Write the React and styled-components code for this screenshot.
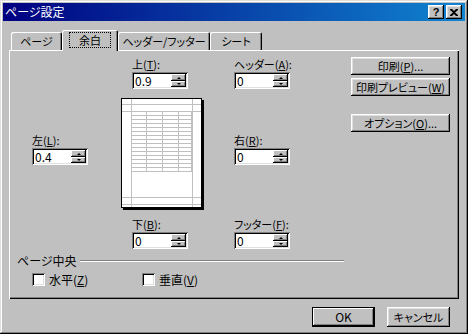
import styled, { createGlobalStyle } from "styled-components";

const GlobalStyle = createGlobalStyle`
  body {
    margin: 0;
    background: #c0c0c0;
  }
  * {
    box-sizing: border-box;
  }
`;

const uiFont = `"Noto Sans CJK JP", "Liberation Sans", sans-serif`;

const raised = `
  box-shadow: inset -1px -1px #000, inset 1px 1px #fff,
    inset -2px -2px #808080, inset 2px 2px #dfdfdf;
`;

const sunken = `
  box-shadow: inset 1px 1px #808080, inset -1px -1px #fff,
    inset 2px 2px #000, inset -2px -2px #dfdfdf;
`;

function Key({ children }) {
  return <Underline>{children}</Underline>;
}

function SpinField({ label, hotkey, value, area, offset, indent }) {
  return (
    <Field $area={area} $offset={offset} $indent={indent}>
      <FieldLabel>
        {label}(<Key>{hotkey}</Key>):
      </FieldLabel>
      <SpinBox>
        <SpinValue>{value}</SpinValue>
        <Spinner>
          <SpinButton>
            <ArrowUp />
          </SpinButton>
          <SpinButton>
            <ArrowDown />
          </SpinButton>
        </Spinner>
      </SpinBox>
    </Field>
  );
}

function PagePreview() {
  const rows = [];
  for (let y = 17.5; y <= 73.5; y += 4) rows.push(y);
  const cols = [25.5, 41.5, 57.5, 70.5];
  return (
    <Preview>
      <svg width="83" height="112" viewBox="0 0 83 112">
        <rect x="2" y="2" width="81" height="110" fill="#000" />
        <rect x="0.5" y="0.5" width="80" height="109" fill="#fff" stroke="#000" />
        <g stroke="#c0c0c0" strokeWidth="1">
          <line x1="10.5" y1="1" x2="10.5" y2="109" />
          <line x1="71.5" y1="1" x2="71.5" y2="109" />
          <line x1="1" y1="6.5" x2="80" y2="6.5" />
          <line x1="1" y1="13.5" x2="80" y2="13.5" />
          <line x1="1" y1="99.5" x2="80" y2="99.5" />
          <line x1="1" y1="106.5" x2="80" y2="106.5" />
          {rows.map((y) => (
            <line key={y} x1="10" y1={y} x2="71" y2={y} />
          ))}
          {cols.map((x) => (
            <line key={x} x1={x} y1="13" x2={x} y2="74" />
          ))}
        </g>
      </svg>
    </Preview>
  );
}

function App() {
  return (
    <>
      <GlobalStyle />
      <Window>
        <TitleBar>
          <TitleText>ページ設定</TitleText>
          <TitleButton>?</TitleButton>
          <TitleButton>
            <svg width="8" height="7" viewBox="0 0 8 7">
              <path d="M0 0h2l2 2 2-2h2v1L5 3.5 8 6v1H6L4 5 2 7H0V6l3-2.5L0 1z" fill="#000" />
            </svg>
          </TitleButton>
        </TitleBar>

        <TabRow>
          <Tab $width={51}>ページ</Tab>
          <Tab $width={56} $active>
            <Focus>余白</Focus>
          </Tab>
          <Tab $width={92}>ヘッダー/フッター</Tab>
          <Tab $width={52}>シート</Tab>
        </TabRow>

        <Panel>
          <TopRow>
            <Form>
              <SpinField area="top" label="上" hotkey="T" value="0.9" indent />
              <SpinField area="header" label="ヘッダー" hotkey="A" value="0" />
              <SpinField area="left" label="左" hotkey="L" value="0.4" offset />
              <PreviewCell>
                <PagePreview />
              </PreviewCell>
              <SpinField area="right" label="右" hotkey="R" value="0" offset />
              <SpinField area="bottom" label="下" hotkey="B" value="0" indent />
              <SpinField area="footer" label="フッター" hotkey="F" value="0" />
            </Form>
            <SideButtons>
              <Button $width={99} $height={18}>
                印刷(<Key>P</Key>)...
              </Button>
              <Button $width={99} $height={18}>
                印刷プレビュー(<Key>W</Key>)
              </Button>
              <Button $width={99} $height={18} $gap={18}>
                オプション(<Key>O</Key>)...
              </Button>
            </SideButtons>
          </TopRow>

          <Group>
            <Legend>
              <span>ページ中央</span>
              <Rule />
            </Legend>
            <CheckRow>
              <Check $width={110}>
                <CheckBox />
                <span>
                  水平(<Key>Z</Key>)
                </span>
              </Check>
              <Check>
                <CheckBox />
                <span>
                  垂直(<Key>V</Key>)
                </span>
              </Check>
            </CheckRow>
          </Group>
        </Panel>

        <Footer>
          <DefaultButton>OK</DefaultButton>
          <Button $width={63} $height={20}>
            キャンセル
          </Button>
        </Footer>
      </Window>
    </>
  );
}

const Window = styled.div`
  width: 468px;
  height: 334px;
  padding: 3px;
  display: flex;
  flex-direction: column;
  background: #c0c0c0;
  box-shadow: inset -1px -1px #000, inset 1px 1px #dfdfdf,
    inset -2px -2px #808080, inset 2px 2px #fff;
  font-family: ${uiFont};
  font-size: 11px;
  font-feature-settings: "palt";
  color: #000;
`;

const TitleBar = styled.div`
  height: 18px;
  display: flex;
  align-items: center;
  gap: 2px;
  padding: 0 3px 0 2px;
  background: linear-gradient(to right, #000080, #1084d0);
`;

const TitleText = styled.div`
  flex: 1;
  color: #fff;
  font-size: 12px;
  line-height: 18px;
`;

const TitleButton = styled.div`
  width: 16px;
  height: 14px;
  display: flex;
  align-items: center;
  justify-content: center;
  background: #c0c0c0;
  font-family: "Liberation Sans", sans-serif;
  font-weight: bold;
  font-size: 11px;
  line-height: 14px;
  ${raised}
`;

const TabRow = styled.div`
  height: 20px;
  margin-top: 9px;
  padding-left: 8px;
  display: flex;
  align-items: flex-start;
`;

const Tab = styled.div`
  width: ${(p) => p.$width}px;
  height: ${(p) => (p.$active ? 21 : 18)}px;
  margin-top: ${(p) => (p.$active ? 0 : 2)}px;
  position: relative;
  z-index: ${(p) => (p.$active ? 1 : 0)};
  display: flex;
  align-items: center;
  justify-content: center;
  padding-bottom: ${(p) => (p.$active ? 2 : 0)}px;
  background: #c0c0c0;
  border-radius: 2px 2px 0 0;
  font-size: 11px;
  line-height: 14px;
  white-space: nowrap;
  box-shadow: inset 1px 1px #fff, inset -1px 0 #000, inset -2px 0 #808080;
`;

const Focus = styled.span`
  padding: 0 9px;
  outline: 1px dotted #000;
  outline-offset: 0;
  line-height: 14px;
`;

const Panel = styled.div`
  width: 450px;
  height: 249px;
  margin-left: 6px;
  padding: 7px 0 0 8px;
  display: flex;
  flex-direction: column;
  background: #c0c0c0;
  box-shadow: inset 1px 1px #fff, inset -1px -1px #000, inset -2px -2px #808080;
`;

const TopRow = styled.div`
  display: flex;
  align-items: flex-start;
`;

const Form = styled.div`
  margin-left: 15px;
  display: grid;
  grid-template-columns: 89px 113px 96px;
  grid-template-rows: 32px 9px 112px 7px 32px;
  grid-template-areas:
    ". top header"
    ". . ."
    "left preview right"
    ". . ."
    ". bottom footer";
`;

const Field = styled.div`
  grid-area: ${(p) => p.$area};
  align-self: start;
  margin-top: ${(p) => (p.$offset ? 35 : 0)}px;
  padding-left: ${(p) => (p.$indent ? 11 : 0)}px;
  display: flex;
  flex-direction: column;
`;

const FieldLabel = styled.div`
  height: 15px;
  line-height: 14px;
  white-space: nowrap;
`;

const Underline = styled.span`
  text-decoration: underline;
  text-underline-offset: 1px;
`;

const SpinBox = styled.div`
  width: 56px;
  height: 17px;
  padding: 2px;
  display: flex;
  background: #fff;
  ${sunken}
`;

const SpinValue = styled.div`
  flex: 1;
  padding-left: 1px;
  line-height: 13px;
  font-size: 12px;
`;

const Spinner = styled.div`
  width: 15px;
  display: grid;
  grid-template-rows: 7px 6px;
`;

const SpinButton = styled.div`
  display: flex;
  align-items: center;
  justify-content: center;
  background: #c0c0c0;
  box-shadow: inset -1px -1px #000, inset 1px 1px #fff, inset -2px -2px #808080;
`;

const ArrowUp = styled.span`
  width: 0;
  height: 0;
  border-left: 2px solid transparent;
  border-right: 2px solid transparent;
  border-bottom: 2px solid #000;
`;

const ArrowDown = styled.span`
  width: 0;
  height: 0;
  border-left: 2px solid transparent;
  border-right: 2px solid transparent;
  border-top: 2px solid #000;
`;

const PreviewCell = styled.div`
  grid-area: preview;
`;

const Preview = styled.div`
  width: 83px;
  height: 112px;
  svg {
    display: block;
  }
`;

const SideButtons = styled.div`
  margin-left: 21px;
  display: flex;
  flex-direction: column;
  gap: 3px;
`;

const Button = styled.div`
  width: ${(p) => p.$width}px;
  height: ${(p) => p.$height}px;
  margin-top: ${(p) => (p.$gap ? p.$gap - 3 : 0)}px;
  display: flex;
  align-items: center;
  justify-content: center;
  background: #c0c0c0;
  line-height: 14px;
  white-space: nowrap;
  ${raised}
`;

const DefaultButton = styled.div`
  width: 63px;
  height: 20px;
  display: flex;
  align-items: center;
  justify-content: center;
  background: #c0c0c0;
  font-size: 12px;
  line-height: 14px;
  box-shadow: inset 0 0 0 1px #000, inset -2px -2px #000, inset 2px 2px #fff,
    inset -3px -3px #808080;
`;

const Group = styled.div`
  width: 327px;
  margin-top: 5px;
`;

const Legend = styled.div`
  height: 14px;
  display: flex;
  align-items: center;
  gap: 3px;
  font-size: 12px;
  line-height: 14px;
`;

const Rule = styled.div`
  flex: 1;
  height: 2px;
  border-top: 1px solid #808080;
  border-bottom: 1px solid #fff;
`;

const CheckRow = styled.div`
  margin-top: 5px;
  padding-left: 15px;
  display: flex;
`;

const Check = styled.div`
  width: ${(p) => (p.$width ? `${p.$width}px` : "auto")};
  height: 13px;
  display: flex;
  align-items: center;
  gap: 4px;
  font-size: 12px;
  line-height: 13px;
`;

const CheckBox = styled.div`
  width: 13px;
  height: 13px;
  background: #fff;
  ${sunken}
`;

const Footer = styled.div`
  margin-top: 8px;
  padding-right: 15px;
  display: flex;
  justify-content: flex-end;
  gap: 12px;
`;

export default App;
